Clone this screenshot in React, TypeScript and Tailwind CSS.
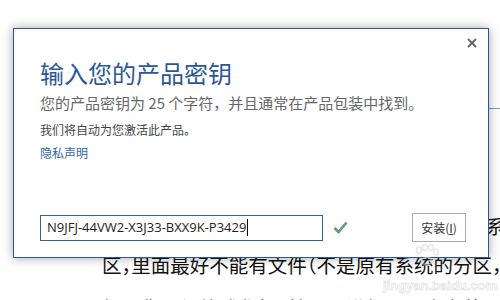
import React from "react";

const cjk = { fontFamily: '"Noto Sans CJK SC", "Noto Sans", sans-serif' };

export default function App() {
  return (
    <div className="relative w-[500px] h-[300px] overflow-hidden bg-white" style={cjk}>
      {/* background article */}
      <div className="pt-[108px]">
        <div className="h-px bg-[#6fa0d8] ml-[300px]" />
        <div className="mt-[97px] text-[19.5px] leading-[39px] text-[#111] whitespace-nowrap [font-feature-settings:'halt']">
          <div className="flex justify-end -mr-[25px]">把分好的一个区格式化好，用来安装新系统</div>
          <div className="pl-[102px]">区，里面最好不能有文件（不是原有系统的分区，</div>
          <div className="pl-[102px] pt-[4px]">如果您已经格式化好，就可以进行下一步安装了，</div>
        </div>
      </div>

      {/* dialog */}
      <div className="absolute left-[13px] top-[28px] w-[476px] h-[230px] border border-[#2b579a] bg-white shadow-[0_0_10px_rgba(0,0,0,0.35)] flex flex-col">
        <button className="absolute top-[9px] right-[11px] w-[10px] h-[10px] flex items-center justify-center">
          <svg width="10" height="10" viewBox="0 0 10 10">
            <path d="M1 1 L9 9 M9 1 L1 9" stroke="#666" strokeWidth="1.8" />
          </svg>
        </button>
        <div className="pl-[26px] pt-[28px]">
          <div className="text-[24px] leading-[32px] text-[#2b579a]">输入您的产品密钥</div>
          <div className="mt-[4px] text-[15px] leading-[20px] text-[#666]">
            您的产品密钥为 25 个字符，并且通常在产品包装中找到。
          </div>
          <div className="mt-[9px] text-[12px] leading-[16px] text-[#444]">我们将自动为您激活此产品。</div>
          <div className="mt-[7px] text-[12px] leading-[16px] text-[#2f66a8]">隐私声明</div>
        </div>
        <div className="mt-auto mb-[15px] flex items-center pl-[26px]">
          <div
            className="w-[283px] h-[26px] border border-[#2b62b0] flex items-center pl-[6px] text-[13px] text-[#222]"
            style={{ fontFamily: '"Open Sans", "Noto Sans", sans-serif' }}
          >
            <span>N9JFJ-44VW2-X3J33-BXX9K-P3429</span>
            <span className="w-px h-[17px] bg-black ml-px" />
          </div>
          <svg className="ml-[10px]" width="15" height="13" viewBox="0 0 15 13">
            <path d="M1.5 7 L5.5 11 L13.5 1.5" stroke="#5a9c84" strokeWidth="2.6" fill="none" />
          </svg>
          <div className="ml-auto mr-[22px] w-[54px] h-[29px] border border-[#ababab] flex items-center justify-center text-[12px] text-[#333]">
            安装(<span className="underline">I</span>)
          </div>
        </div>
      </div>

      {/* watermark */}
      <div className="absolute left-[413px] top-[244px] opacity-60">
        <svg width="26" height="22" viewBox="0 0 26 22">
          <g fill="none" stroke="#d8d8d8" strokeWidth="1.5">
            <ellipse cx="6" cy="6" rx="2.5" ry="3.5" />
            <ellipse cx="12" cy="3.5" rx="2.5" ry="3" />
            <ellipse cx="18" cy="3.5" rx="2.5" ry="3" />
            <ellipse cx="23" cy="8" rx="2.2" ry="3" />
            <path d="M8 19 C8 12, 19 11, 19 19 C16 21, 11 21, 8 19 Z" />
          </g>
        </svg>
      </div>
      <div
        className="absolute left-[383px] top-[276px] text-[13px] font-bold text-white"
        style={{ fontFamily: '"Liberation Sans", sans-serif', WebkitTextStroke: "0.6px #dcdcdc" }}
      >
        jingyan.baidu.com
      </div>
    </div>
  );
}
